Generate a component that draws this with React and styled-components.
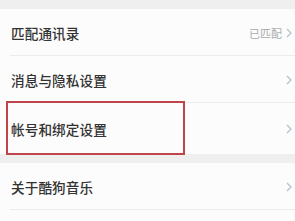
import React from "react";
import styled, { createGlobalStyle } from "styled-components";

const Global = createGlobalStyle`
  html, body { margin: 0; padding: 0; background: #fbfbfb; }
  body { font-family: "Noto Sans CJK SC", "Noto Sans", sans-serif; }
`;

const Page = styled.div`
  width: 295px;
  height: 221px;
  overflow: hidden;
  background: #fbfbfb;
`;

const Band = styled.div`
  height: ${(p) => p.h}px;
  background: #efefef;
`;

const Row = styled.div`
  position: relative;
  height: ${(p) => p.h}px;
  display: flex;
  align-items: center;
  padding: 0 3px 0 11px;
  background: #fcfcfc;
  &::after {
    content: "";
    display: ${(p) => (p.line ? "block" : "none")};
    position: absolute;
    left: 10px;
    right: 0;
    bottom: 0;
    height: 1px;
    background: #ececec;
  }
`;

const Label = styled.span`
  flex: 1;
  font-size: 13.6px;
  font-weight: 500;
  color: #333;
  letter-spacing: 0.1px;
`;

const Value = styled.span`
  font-size: 11px;
  color: #aaa;
  margin-right: 4px;
`;

const Chevron = styled.svg`
  width: 6px;
  height: 10px;
`;

const Highlight = styled.div`
  position: absolute;
  left: 6px;
  top: -2px;
  width: 175px;
  height: 50px;
  border: 2px solid #c0454b;
`;

const Arrow = () => (
  <Chevron viewBox="0 0 6 10">
    <path d="M1 1 L5 5 L1 9" fill="none" stroke="#b9c2ca" strokeWidth="1.3" />
  </Chevron>
);

export default function App() {
  return (
    <Page>
      <Global />
      <Band h={9} />
      <Row h={47} line>
        <Label>匹配通讯录</Label>
        <Value>已匹配</Value>
        <Arrow />
      </Row>
      <Row h={47} line>
        <Label>消息与隐私设置</Label>
        <Arrow />
      </Row>
      <Row h={51}>
        <Label>帐号和绑定设置</Label>
        <Arrow />
        <Highlight />
      </Row>
      <Band h={9} />
      <Row h={47} line>
        <Label>关于酷狗音乐</Label>
        <Arrow />
      </Row>
      <Row h={20} />
    </Page>
  );
}
